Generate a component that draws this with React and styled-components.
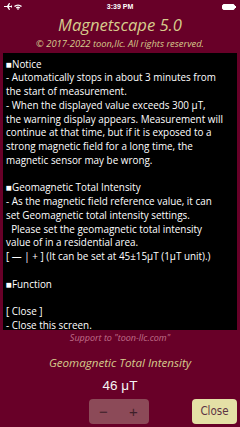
import React from 'react'
import styled, { createGlobalStyle } from 'styled-components'

const Global = createGlobalStyle`
html, body {
  margin: 0;
  padding: 0;
  background: #680028;
}
#root {
  height: 427px;
}
`

const Screen = styled.div`
display: flex;
flex-direction: column;
height: 427px;
width: 240px;
background: #680028;
font-family: "Open Sans", "Noto Sans", sans-serif;
overflow: hidden;
`

const StatusBar = styled.div`
display: grid;
grid-template-columns: 1fr auto 1fr;
align-items: center;
height: 13px;
padding: 0 4px;
color: #fff;
`

const StatusLeft = styled.div`
display: flex;
align-items: center;
gap: 2px;
`

const StatusTime = styled.div`
font-family: "Liberation Sans", sans-serif;
font-weight: bold;
font-size: 7px;
`

const StatusRight = styled.div`
display: flex;
justify-content: flex-end;
`

const Title = styled.h1`
margin: 2px 0 0;
font-weight: normal;
font-style: italic;
font-size: 16.6px;
line-height: 20px;
text-align: center;
color: #d6cb8c;
`

const Copyright = styled.div`
margin-top: 3px;
font-style: italic;
font-size: 9.4px;
line-height: 12px;
text-align: center;
color: #d6cb8c;
`

const HelpBox = styled.div`
margin: 2.5px 3px 0;
height: 272px;
padding: 5px 3px 0;
background: #000;
color: #fff;
font-size: 9.9px;
line-height: 13.75px;
overflow: hidden;
`

const Line = styled.div`
white-space: pre;
min-height: 13.75px;
`

const Support = styled.div`
font-style: italic;
font-size: 9px;
line-height: 15px;
text-align: center;
color: #c0708c;
`

const Label = styled.div`
margin-top: 10px;
font-style: italic;
font-size: 11.6px;
line-height: 16px;
text-align: center;
color: #d6cb8c;
`

const Value = styled.div`
margin-top: 6px;
font-family: "Liberation Sans", sans-serif;
font-size: 13.5px;
line-height: 18px;
text-align: center;
color: #f4f4f4;
`

const Controls = styled.div`
display: grid;
grid-template-columns: 1fr auto 1fr;
align-items: center;
margin-top: 4px;
padding-right: 3px;
height: 25px;
`

const Stepper = styled.div`
grid-column: 2;
display: flex;
width: 60px;
height: 25px;
border-radius: 4px;
background: #8c4a58;
`

const StepButton = styled.div`
flex: 1;
display: flex;
align-items: center;
justify-content: center;
color: #3e2029;
font-family: "Liberation Sans", sans-serif;
font-size: 15px;
`

const CloseButton = styled.div`
grid-column: 3;
justify-self: end;
display: flex;
align-items: center;
justify-content: center;
width: 45px;
height: 25px;
border-radius: 4px;
background: #e4e0a6;
color: #5c3444;
font-family: "DejaVu Sans Condensed", "Liberation Sans", sans-serif;
font-size: 11.5px;
`

const helpLines = [
  '■Notice',
  '- Automatically stops in about 3 minutes from',
  'the start of measurement.',
  '- When the displayed value exceeds 300 μT,',
  'the warning display appears. Measurement will',
  'continue at that time, but if it is exposed to a',
  'strong magnetic field for a long time, the',
  'magnetic sensor may be wrong.',
  '',
  '■Geomagnetic Total Intensity',
  '- As the magnetic field reference value, it can',
  'set Geomagnetic total intensity settings.',
  '  Please set the geomagnetic total intensity',
  'value of in a residential area.',
  '[ — | + ] (It can be set at 45±15μT (1μT unit).)',
  '',
  '■Function',
  '',
  '[ Close ]',
  '- Close this screen.',
]

const App = () => {
  return (
    <Screen>
      <Global />
      <StatusBar>
        <StatusLeft>
          <svg width="8" height="7" viewBox="0 0 8 7">
            <path d="M0 3h3L5 0h1L5 3h2l1-1v3L7 4H5l1 3H5L3 4H0z" fill="#fff" />
          </svg>
          <svg width="8" height="6" viewBox="0 0 8 6">
            <path d="M0 2a6 6 0 0 1 8 0l-1 1a4.5 4.5 0 0 0-6 0zM1.8 3.6a3.3 3.3 0 0 1 4.4 0L5.2 4.6a2 2 0 0 0-2.4 0zM4 6l-1-1a1.5 1.5 0 0 1 2 0z" fill="#fff" />
          </svg>
        </StatusLeft>
        <StatusTime>3:39 PM</StatusTime>
        <StatusRight>
          <svg width="14" height="6" viewBox="0 0 14 6">
            <rect x="0.5" y="0.5" width="12" height="5" rx="1.5" fill="#fff" stroke="#fff" />
            <rect x="13" y="2" width="1" height="2" fill="#fff" />
          </svg>
        </StatusRight>
      </StatusBar>
      <Title>Magnetscape 5.0</Title>
      <Copyright>© 2017-2022 toon,llc. All rights reserved.</Copyright>
      <HelpBox>
        {helpLines.map((t, i) => (
          <Line key={i}>{t}</Line>
        ))}
      </HelpBox>
      <Support>Support to "toon-llc.com"</Support>
      <Label>Geomagnetic Total Intensity</Label>
      <Value>46 μT</Value>
      <Controls>
        <Stepper>
          <StepButton>−</StepButton>
          <StepButton>+</StepButton>
        </Stepper>
        <CloseButton>Close</CloseButton>
      </Controls>
    </Screen>
  )
}

export default App
